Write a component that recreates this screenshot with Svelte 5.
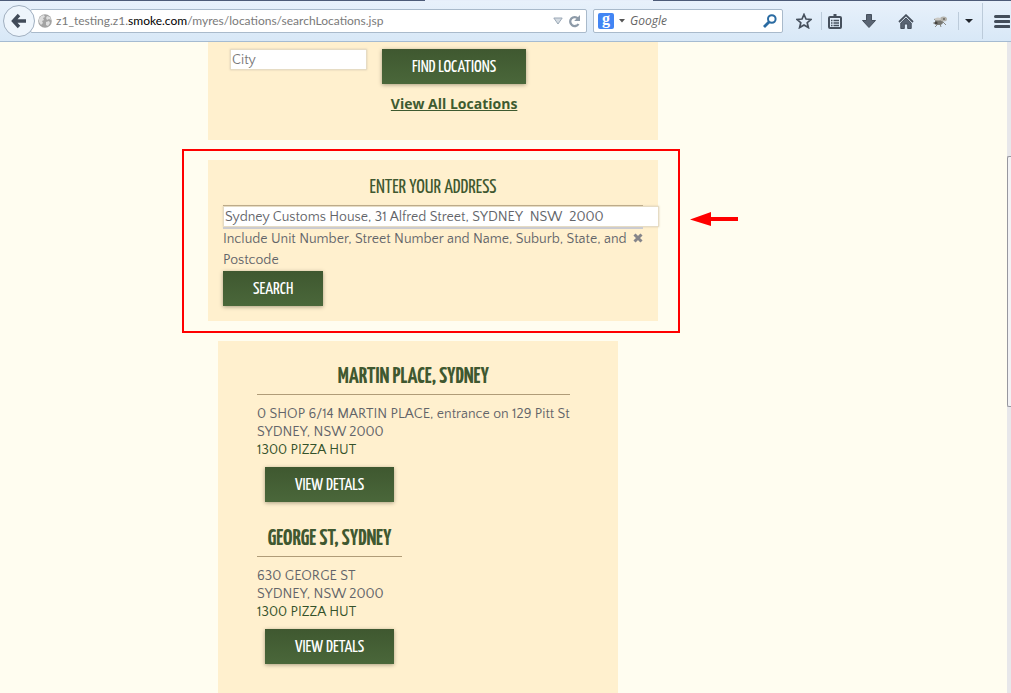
<script>
  const stores = [
    { name: 'MARTIN PLACE, SYDNEY', street: '0 SHOP 6/14 MARTIN PLACE, entrance on 129 Pitt St', town: 'SYDNEY, NSW 2000', phone: '1300 PIZZA HUT' },
    { name: 'GEORGE ST, SYDNEY', street: '630 GEORGE ST', town: 'SYDNEY, NSW 2000', phone: '1300 PIZZA HUT' }
  ];
  let city = $state('');
  let address = $state('Sydney Customs House, 31 Alfred Street, SYDNEY\u00a0 NSW\u00a0 2000');
</script>

<div class="browser">
  <div class="tabs"><span class="tab"></span></div>
  <header class="toolbar">
    <button class="back" aria-label="Back">
      <svg width="16" height="16" viewBox="0 0 16 16"><path d="M8 2 2.5 8 8 14M3 8H15" fill="none" stroke="#414b59" stroke-width="3.4" /></svg>
    </button>
    <div class="urlbar">
      <svg width="14" height="14" viewBox="0 0 14 14">
        <circle cx="7" cy="7" r="6.8" fill="#a3a3a3" />
        <path d="M1 5 3 2 6 1 7 3 5 4 6 6 4 7 5 9 3 11 1 8ZM9 2 12 3 13 6 11 5 9 6 8 4ZM8 8 11 7 12 9 10 12 8 11Z" fill="#dedede" />
      </svg>
      <a class="url" href="#top">z1_testing.z1.<b>smoke.com</b>/myres/locations/searchLocations.jsp</a>
      <svg width="10" height="8" viewBox="0 0 10 8"><path d="M.8 1H9.2L5 7Z" fill="#d4dbe2" stroke="#9ba8b6" /></svg>
      <button class="icon" aria-label="Reload">
        <svg width="13" height="13" viewBox="0 0 13 13"><path d="M10 3.5A4.5 4.5 0 1 0 10.5 9" fill="none" stroke="#8d9aa8" stroke-width="2.3" /><path d="M12 0V6H6.2Z" fill="#8d9aa8" /></svg>
      </button>
    </div>
    <div class="search">
      <span class="engine">g</span>
      <svg width="6" height="4" viewBox="0 0 6 4"><path d="M0 0H6L3 3.6Z" fill="#555" /></svg>
      <input type="text" placeholder="Google" aria-label="Search with Google" />
      <button class="icon" aria-label="Search">
        <svg width="14" height="14" viewBox="0 0 14 14"><circle cx="8.8" cy="5" r="3.8" fill="none" stroke="#2a6ba2" stroke-width="2" /><path d="M6 8 1 13" stroke="#2a6ba2" stroke-width="2.8" /></svg>
      </button>
    </div>
    <nav class="tools" aria-label="Browser tools">
      <button class="icon star" aria-label="Bookmark">
        <svg width="16" height="16" viewBox="0 0 16 16"><path d="M8 1.5 10 6 15 6.4 11.2 9.7 12.4 14.6 8 12 3.6 14.6 4.8 9.7 1 6.4 6 6Z" fill="none" stroke="#46505d" stroke-width="1.7" /></svg>
      </button>
      <button class="icon list" aria-label="Bookmarks menu">
        <svg width="14" height="15" viewBox="0 0 14 15"><rect x="1" y="3" width="12" height="11" rx="1" fill="none" stroke="#46505d" stroke-width="2" /><path d="M4 4V2H5.5V0H8.500V2H10V4Z" fill="#46505d" /><path d="M3 6.500H4.500M3 9H4.500M3 11.500H4.500M5.500 6.500H11M5.500 9H11M5.500 11.500H11" stroke="#46505d" stroke-width="1.300" /></svg>
      </button>
      <button class="icon down" aria-label="Downloads">
        <svg width="14" height="14" viewBox="0 0 14 14"><path d="M4.500.5H9.500V6.500H13.500L7 13.500.5 6.500H4.500Z" fill="#596473" stroke="#46505d" /></svg>
      </button>
      <button class="icon home" aria-label="Home">
        <svg width="16" height="15" viewBox="0 0 16 15"><path d="M1 8 8 1.200 15 8" fill="none" stroke="#46505d" stroke-width="1.800" /><path d="M8 4 13.200 9V14.500H9.700V10H6.300V14.500H2.800V9Z" fill="#596473" stroke="#46505d" /></svg>
      </button>
      <button class="icon bug" aria-label="Add-on">
        <svg width="16" height="13" viewBox="0 0 16 13"><path d="M2 4 5 6M1 8 5 8M3 12 6 9M9 12 8 9M14 10 11 7M14 2 12 4" stroke="#8a8a86" /><ellipse cx="7" cy="7" rx="4" ry="3" fill="#777772" /><ellipse cx="11.500" cy="4" rx="3.500" ry="2.500" fill="#b4b2ac" /><ellipse cx="6" cy="4" rx="3" ry="1.500" fill="#cbc9c4" /><circle cx="4" cy="8" r="1.600" fill="#45423f" /><circle cx="12" cy="4" r="1" fill="#65625d" /></svg>
      </button>
      <button class="icon more" aria-label="More">
        <svg width="8" height="4" viewBox="0 0 8 4"><path d="M0 0H8L4 4Z" fill="#20252c" /></svg>
      </button>
      <button class="icon menu" aria-label="Menu">
        <svg width="16" height="13" viewBox="0 0 16 13"><path d="M1.500 1.500H15M1.500 6.500H15M1.500 11.500H15" stroke="#434d5a" stroke-width="3" stroke-linecap="round" /></svg>
      </button>
    </nav>
  </header>

  <div class="viewport" id="top">
    <main>
      <section class="card city">
        <input class="field" type="text" placeholder="City" aria-label="City" bind:value={city} />
        <div class="find">
          <button class="btn">FIND LOCATIONS</button>
          <a href="#all">View All Locations</a>
        </div>
      </section>

      <section class="card address">
        <h2><label for="address">ENTER YOUR ADDRESS</label></h2>
        <input class="field" id="address" type="text" bind:value={address} />
        <div class="hint">
          <p>Include Unit Number, Street Number and Name, Suburb, State, and Postcode</p>
          <button class="icon clear" aria-label="Clear address" onclick={() => (address = '')}>
            <svg width="10" height="10" viewBox="0 0 10 10"><path d="M1.500 1.500 8.500 8.500M8.500 1.500 1.500 8.500" stroke="#85858a" stroke-width="3" /></svg>
          </button>
        </div>
        <button class="btn">SEARCH</button>
        <div class="frame"></div>
        <svg class="arrow" width="48" height="14" viewBox="0 0 48 14"><path d="M0 7.500 21 0V5H48V9H21V14Z" fill="#f00" /></svg>
      </section>

      <section class="results">
        {#each stores as store}
          <article>
            <h3>{store.name}</h3>
            <p>{store.street}<br />{store.town}<br /><a href="#call">{store.phone}</a></p>
            <button class="btn">VIEW DETALS</button>
          </article>
        {/each}
      </section>
    </main>
    <div class="scrollbar"><div class="thumb"></div></div>
  </div>
</div>

<style>
  :global(body) { margin: 0; overflow: hidden; }
  .browser, .browser * { box-sizing: border-box; }
  .browser {
    --display: "Yanone Kaffeesatz", Roboto, sans-serif;
    height: 100vh;
    display: flex;
    flex-direction: column;
    overflow: hidden;
    background: #fffdf0;
    color: #626469;
    font: 14px/18px "Quattrocento Sans", Lato, sans-serif;
  }
  button, input { font: inherit; margin: 0; border: 0; padding: 0; }
  h2, h3, p { margin: 0; }

  .tabs { flex: none; height: 1px; background: #4d5b78; display: grid; grid-template-columns: 425fr 228fr 358fr; }
  .tab { grid-column: 2; background: #e6eefa; }
  .toolbar {
    flex: none;
    height: 41px;
    display: flex;
    align-items: center;
    padding-left: 3px;
    background: linear-gradient(#e8f1fb, #d8e8f7);
    border-bottom: 1px solid #a5bbd1;
    font: 12px/16px Lato, sans-serif;
  }
  .icon { display: flex; align-items: center; justify-content: center; background: none; flex: none; }
  .back {
    flex: none;
    width: 32px;
    height: 32px;
    display: flex;
    align-items: center;
    justify-content: center;
    border: 1px solid #a0afc0;
    border-radius: 50%;
    background: #eef5fc;
    z-index: 1;
  }
  .urlbar, .search {
    height: 24px;
    display: flex;
    align-items: center;
    background: #fff;
    border: 1px solid #a9bacb;
    border-radius: 2px;
  }
  .urlbar { flex: 1; min-width: 0; gap: 4px; margin-left: -5px; padding: 0 5px 0 7px; }
  .urlbar .icon { width: 14px; }
  .url { flex: 1; min-width: 0; overflow: hidden; white-space: nowrap; color: #7a7a7a; text-decoration: none; }
  .url b { font-weight: 400; color: #000; }
  .search { flex: none; width: 190px; margin-left: 6px; padding: 0 5px 0 4px; gap: 5px; }
  .search input { flex: 1; min-width: 0; background: none; font: italic 12px/16px "Open Sans", sans-serif; outline: 0; }
  .search input::placeholder { color: #666; }
  .engine { width: 16px; height: 16px; border-radius: 2px; background: #4285f4; color: #fff; font: 700 16px/12px "Liberation Serif", serif; text-align: center; }
  .tools { flex: none; display: flex; align-items: center; }
  .tools .icon { width: 36px; height: 18px; }
  .tools .star { margin-left: 3px; border-right: 1px solid #bccbda; }
  .tools .list { width: 26px; }
  .tools .down { width: 42px; }
  .tools .home { width: 31px; }
  .tools .bug { width: 38px; border-right: 1px solid #bccbda; }
  .tools .more { width: 24px; height: 36px; border-right: 1px solid #bccbda; justify-content: flex-start; padding-left: 6px; }
  .tools .menu { width: 28px; padding-left: 10px; }

  .viewport { flex: 1; min-height: 0; display: flex; }
  main { flex: 1; min-width: 0; padding-left: 208px; overflow: hidden; }
  .scrollbar { width: 4px; padding-top: 114px; background: #e7e7ea; }
  .thumb { height: 251px; border: 1px solid #97979f; border-right: 0; border-radius: 2px 0 0 2px; background: #f2f2f4; }

  .card { max-width: 450px; margin-bottom: 20px; background: #fff0ce; }
  .field { height: 21px; padding: 0 1px; background: #fff; color: #626469; border: 1px solid #e6dcc4; box-shadow: 0 0 2px #d8cbb0; }
  .field::placeholder { color: #777; opacity: 1; }
  .btn {
    height: 35px;
    padding: 2px 30px 0;
    color: #fff;
    background: linear-gradient(#3f5830, #4a673a);
    box-shadow: 0 1px 4px #a99e82;
    font: 18px/33px var(--display);
    white-space: nowrap;
  }
  .city { display: flex; align-items: flex-start; gap: 15px; padding: 7px 0 26px 22px; }
  .city .field { width: 137px; }
  .find { display: flex; flex-direction: column; align-items: center; gap: 10px; }
  .find a { color: #3e5a30; font: 700 14px/20px "Open Sans", sans-serif; }

  .address { position: relative; padding: 16px 15px 15px; }
  h2, h3 { color: #3f5830; text-align: center; border-bottom: 1px solid #b09c78; }
  h2 { font: 20px/24px var(--display); padding-bottom: 5px; }
  .address .field { display: block; width: calc(100% + 16px); }
  .hint { display: flex; justify-content: space-between; border-top: 2px solid #cbcbd0; line-height: 21px; }
  .hint .clear { width: 10px; height: 18px; }
  .frame { position: absolute; inset: -11px -22px -12px -26px; border: 2px solid #f00; pointer-events: none; }
  .arrow { position: absolute; left: calc(100% + 32px); top: 52px; }

  .results { max-width: 400px; min-height: 400px; margin-left: 10px; padding: 24px 39px; background: #fff0ce; }
  article { width: fit-content; margin-bottom: 25px; }
  h3 { font: 700 23px/24px var(--display); padding-bottom: 5px; }
  article p { padding: 10px 0 8px; white-space: nowrap; }
  article a { color: #34522a; text-decoration: none; }
  article .btn { display: block; margin: 0 8px; }
</style>
